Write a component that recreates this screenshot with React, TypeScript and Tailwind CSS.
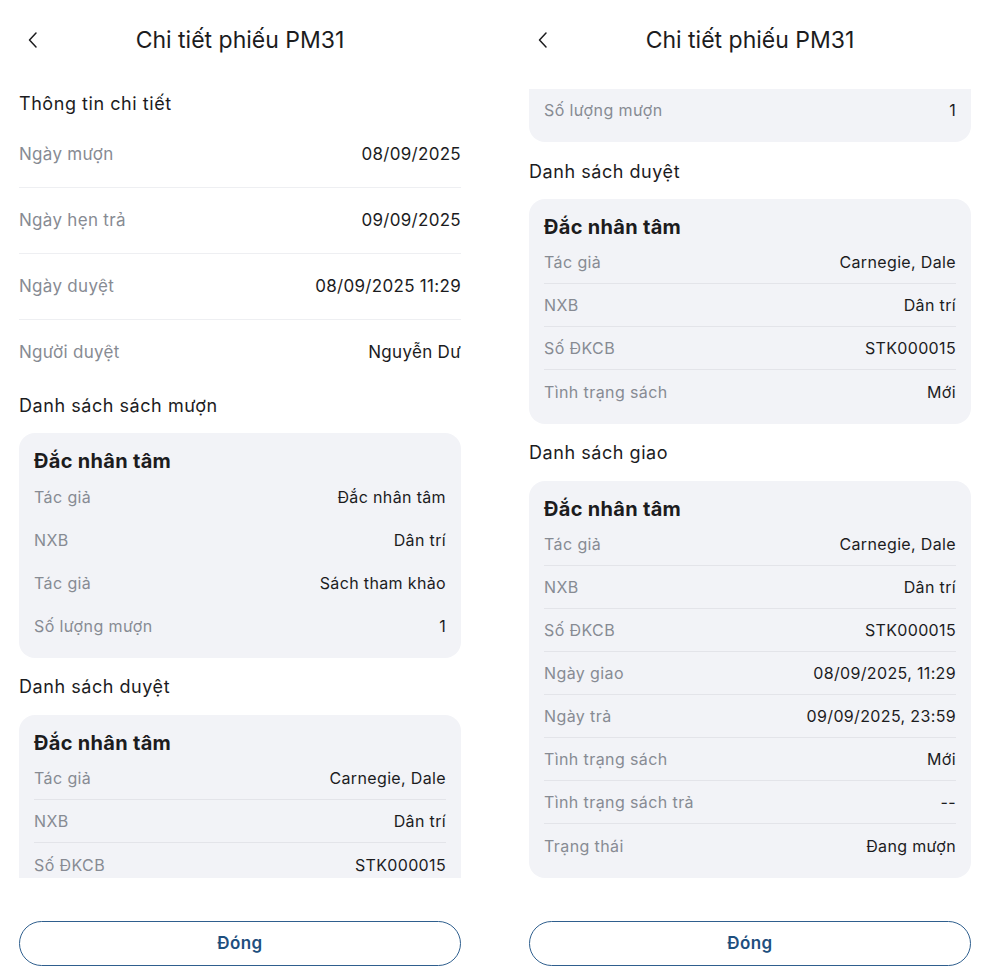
import React from "react";

type Row = [string, string];

function Chevron() {
  return (
    <svg width="12" height="20" viewBox="0 0 12 20" fill="none">
      <path d="M9 3 L2.5 10 L9 17" stroke="#1c1c1e" strokeWidth="1.5" strokeLinecap="round" strokeLinejoin="round" />
    </svg>
  );
}

function Header() {
  return (
    <div className="relative flex h-[89px] shrink-0 items-center justify-center pb-[9px]">
      <div className="absolute left-[27px] top-[30px]">
        <Chevron />
      </div>
      <div className="text-[23px] leading-[28px] text-[#1c1c1e]">Chi tiết phiếu PM31</div>
    </div>
  );
}

function SectionTitle({ children, cls }: { children: React.ReactNode; cls: string }) {
  return (
    <div className={cls + " h-[24px] text-[18px] leading-[24px] tracking-[0.55px] text-[#1c1c1e]"}>
      {children}
    </div>
  );
}

function InfoRows({ rows }: { rows: Row[] }) {
  return (
    <div className="flex flex-col">
      {rows.map(([k, v], i) => (
        <div
          key={i}
          className={
            "flex h-[66px] items-center justify-between text-[17px] tracking-[0.3px] " +
            (i < rows.length - 1 ? "border-b border-[#eeeff2]" : "")
          }
        >
          <span className="text-[#878b93]">{k}</span>
          <span className="text-[#1c1c1e]">{v}</span>
        </div>
      ))}
    </div>
  );
}

function CardRow({ k, v, line }: { k: string; v: string; line: boolean }) {
  return (
    <div
      className={
        "flex h-[43px] items-center justify-between " + (line ? "border-b border-[#e3e4e9]" : "")
      }
    >
      <span className="text-[16px] tracking-[0.4px] text-[#878b93]">{k}</span>
      <span className="text-[16px] tracking-[0.35px] text-[#1c1c1e]">{v}</span>
    </div>
  );
}

function Card({ title, rows, lines }: { title?: string; rows: Row[]; lines: boolean }) {
  return (
    <div className="rounded-[16px] bg-[#f2f3f7] px-[15px] pt-[14px] pb-[11px]">
      {title && (
        <div className="h-[28px] text-[20px] font-bold leading-[28px] tracking-[0.3px] text-[#1c1c1e]">{title}</div>
      )}
      {rows.map(([k, v], i) => (
        <CardRow key={i} k={k} v={v} line={lines && i < rows.length - 1} />
      ))}
    </div>
  );
}

function CloseButton() {
  return (
    <div className="shrink-0 px-[19px] pt-[43px] pb-[5px]">
      <div className="flex h-[45px] items-center justify-center rounded-full border-[1.5px] border-[#2f5f8e] text-[17px] font-semibold tracking-[0.4px] text-[#1f4f7e]">
        Đóng
      </div>
    </div>
  );
}

const duyetRows: Row[] = [
  ["Tác giả", "Carnegie, Dale"],
  ["NXB", "Dân trí"],
  ["Số ĐKCB", "STK000015"],
  ["Tình trạng sách", "Mới"],
];

const giaoRows: Row[] = [
  ["Tác giả", "Carnegie, Dale"],
  ["NXB", "Dân trí"],
  ["Số ĐKCB", "STK000015"],
  ["Ngày giao", "08/09/2025, 11:29"],
  ["Ngày trả", "09/09/2025, 23:59"],
  ["Tình trạng sách", "Mới"],
  ["Tình trạng sách trả", "--"],
  ["Trạng thái", "Đang mượn"],
];

function LeftScreen() {
  return (
    <div className="flex h-[971px] w-[480px] shrink-0 flex-col bg-white">
      <Header />
      <div className="h-[789px] shrink-0 overflow-hidden px-[19px]">
        <SectionTitle cls="mt-[3px] mb-[6px]">Thông tin chi tiết</SectionTitle>
        <InfoRows
          rows={[
            ["Ngày mượn", "08/09/2025"],
            ["Ngày hẹn trả", "09/09/2025"],
            ["Ngày duyệt", "08/09/2025 11:29"],
            ["Người duyệt", "Nguyễn Dư"],
          ]}
        />
        <SectionTitle cls="mt-[8px] mb-[15px]">Danh sách sách mượn</SectionTitle>
        <Card
          title="Đắc nhân tâm"
          lines={false}
          rows={[
            ["Tác giả", "Đắc nhân tâm"],
            ["NXB", "Dân trí"],
            ["Tác giả", "Sách tham khảo"],
            ["Số lượng mượn", "1"],
          ]}
        />
        <SectionTitle cls="mt-[17px] mb-[16px]">Danh sách duyệt</SectionTitle>
        <div className="rounded-t-[16px] bg-[#f2f3f7] px-[15px] pt-[14px] pb-[11px]">
          <div className="h-[28px] text-[20px] font-bold leading-[28px] tracking-[0.3px] text-[#1c1c1e]">Đắc nhân tâm</div>
          <CardRow k="Tác giả" v="Carnegie, Dale" line />
          <CardRow k="NXB" v="Dân trí" line />
          <CardRow k="Số ĐKCB" v="STK000015" line={false} />
        </div>
      </div>
      <CloseButton />
    </div>
  );
}

function RightScreen() {
  return (
    <div className="flex h-[971px] w-[480px] shrink-0 flex-col bg-white">
      <Header />
      <div className="h-[789px] shrink-0 overflow-hidden px-[19px]">
        <div className="-mt-[1px] rounded-b-[16px] bg-[#f2f3f7] px-[15px] pb-[11px]">
          <CardRow k="Số lượng mượn" v="1" line={false} />
        </div>
        <SectionTitle cls="mt-[18px] mb-[15px]">Danh sách duyệt</SectionTitle>
        <Card title="Đắc nhân tâm" lines rows={duyetRows} />
        <SectionTitle cls="mt-[17px] mb-[16px]">Danh sách giao</SectionTitle>
        <Card title="Đắc nhân tâm" lines rows={giaoRows} />
      </div>
      <CloseButton />
    </div>
  );
}

export default function App() {
  return (
    <div
      className="flex h-[971px] w-[987px] gap-[30px] overflow-hidden bg-white"
      style={{ fontFamily: "Inter, 'Noto Sans', sans-serif" }}
    >
      <LeftScreen />
      <RightScreen />
    </div>
  );
}
